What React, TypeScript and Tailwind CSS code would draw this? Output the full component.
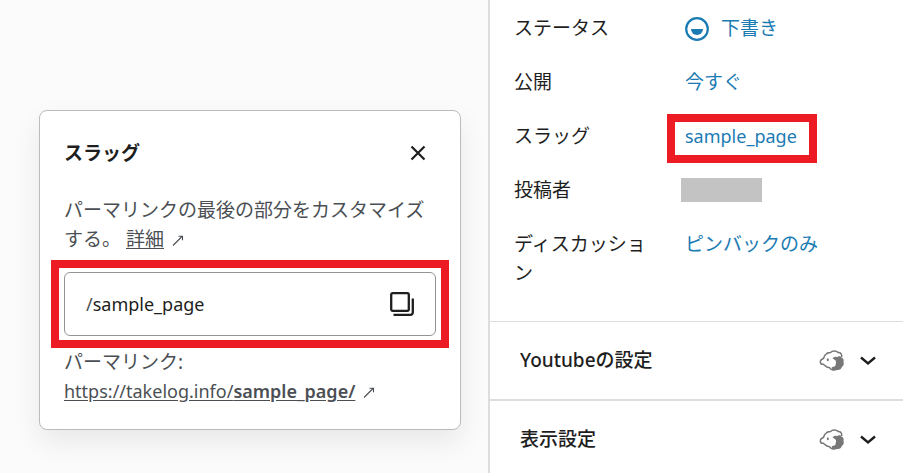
import React from 'react';

const rowClass = 'flex min-h-[54px] items-start px-6 pt-[14px]';
const labelClass = 'w-[146px] shrink-0 mr-[25px]';
const linkButtonClass = 'text-[#1b7bb3] cursor-pointer hover:underline';

const StatusIcon = () => (
  <svg className="h-6 w-6 shrink-0" viewBox="0 0 24 24" aria-hidden="true">
    <circle cx="12" cy="12" r="10.8" fill="none" stroke="currentColor" strokeWidth="2.2" />
    <path d="M6 12h12a6 6 0 0 1-12 0z" fill="currentColor" />
  </svg>
);

const CopyIcon = () => (
  <svg className="h-6 w-6" viewBox="0 0 24 24" fill="none" stroke="currentColor" strokeWidth="2.3" aria-hidden="true">
    <rect x="1.2" y="1.2" width="17.6" height="17.6" rx="1.5" />
    <path d="M22.800 6.500v14a2.300 2.300 0 0 1-2.300 2.300H3.500" />
  </svg>
);

const CloseIcon = () => (
  <svg className="h-4 w-4" viewBox="0 0 16 16" fill="none" stroke="currentColor" strokeWidth="2.2" aria-hidden="true">
    <path d="M1.5 1.5l13 13M14.5 1.5l-13 13" />
  </svg>
);

const ArrowIcon = () => (
  <svg className="ml-2 inline h-3 w-3" viewBox="0 0 12 12" fill="none" stroke="currentColor" strokeWidth="1.1" aria-hidden="true">
    <path d="M1 10.500L10 1.500M6.500 1.200h4v4" />
  </svg>
);

const SheepIcon = () => (
  <svg className="h-6 w-7 text-[#777]" viewBox="0 0 28 24" aria-hidden="true">
    <path
      d="M8 5.500C9 3.500 11.500 3.500 12.500 3.500C14.500 1.500 18.500 1.700 20 3.500C22.500 3.200 24 5 23.700 8M8 5.500C6 6 6.300 8.500 5.300 9.500C3.500 10.500 2 10.800 2.300 12.800C2.500 14.500 3.800 15.500 5.500 15.300C7 16.500 8 18.500 11.500 18.700C12.500 20.500 14 21.200 16 21"
      fill="none"
      stroke="currentColor"
      strokeWidth="1.500"
    />
    <path
      d="M14.500 9.800C15.500 7.800 17.500 7.200 18.800 8.200C20.500 6.800 22.800 7 23.500 8.500C25.500 9.500 26 11 25.500 12.700C26.300 14.800 25.500 16.800 24 17.700C23.500 20 21 21.500 18.800 20.900C17 22 14.500 21.700 13 20C14.500 19.700 14.500 18.700 13.500 18C16.500 18 18.200 16.700 17.500 15.200C19 13.500 17.800 10.500 14.500 9.800Z"
      fill="currentColor"
    />
    <ellipse cx="9.800" cy="10.700" rx="1" ry="1.500" fill="currentColor" />
  </svg>
);

const ChevronIcon = () => (
  <svg className="h-[10px] w-4" viewBox="0 0 16 10" fill="none" stroke="currentColor" strokeWidth="2.4" aria-hidden="true">
    <path d="M1 1.500l7 6 7-6" />
  </svg>
);

const SettingsPanel = ({ title }: { title: string }) => (
  <button type="button" className="flex w-full items-center py-6 pl-[30px] pr-[27px] text-left font-medium">
    <span className="flex-1">{title}</span>
    <SheepIcon />
    <span className="ml-[14px]">
      <ChevronIcon />
    </span>
  </button>
);

const SlugPopover = () => (
  <section
    role="dialog"
    aria-labelledby="slug-title"
    className="w-full max-w-[422px] rounded-lg border border-[#bbb] bg-white px-6 pt-[25px] pb-[23px] text-[#4b4f54] shadow-[0_12px_28px_rgba(0,0,0,0.08)]"
  >
    <div className="flex items-center justify-between pr-[10px] text-[#1e1e1e]">
      <h2 id="slug-title" className="leading-[34px] font-bold">スラッグ</h2>
      <button type="button" aria-label="閉じる" className="cursor-pointer">
        <CloseIcon />
      </button>
    </div>

    <p className="mt-[26px]">
      パーマリンクの最後の部分をカスタマイズする。{' '}
      <a href="#details" className="inline-block underline underline-offset-2">詳細</a>
      <ArrowIcon />
    </p>

    <div className="-mx-[13px] mt-[6px] border-8 border-[#ed1c24] px-[5px] py-1">
      <div className="flex h-16 items-center rounded-md border border-[#949494] px-[21px] text-lg text-[#1e1e1e]">
        <span aria-hidden="true" className="text-[#4b4f54]">/</span>
        <input
          type="text"
          aria-label="スラッグ"
          defaultValue="sample_page"
          className="min-w-0 flex-1 bg-transparent outline-none"
        />
        <button type="button" aria-label="コピー" className="cursor-pointer">
          <CopyIcon />
        </button>
      </div>
    </div>

    <p>パーマリンク:</p>
    <p className="text-lg leading-[29px]">
      <a href="#permalink" className="underline underline-offset-2">
        https://takelog.info/<b className="font-semibold">sample_page/</b>
      </a>
      <ArrowIcon />
    </p>
  </section>
);

const App = () => {
  return (
    <div className="flex min-h-screen bg-[#fbfbfb] font-['Noto_Sans','Noto_Sans_CJK_JP',sans-serif] text-[19px] leading-[29px] text-[#1e1e1e]">
      <main className="min-w-0 flex-1 pt-[110px] pr-[27px] pl-[39px]">
        <SlugPopover />
      </main>

      <aside className="w-[415px] shrink-0 border-l-2 border-[#ddd] bg-white">
        <div className="pb-[33px]">
          <div className={rowClass}>
            <span className={labelClass}>ステータス</span>
            <button type="button" className={`${linkButtonClass} flex items-center gap-3`}>
              <StatusIcon />
              下書き
            </button>
          </div>
          <div className={rowClass}>
            <span className={labelClass}>公開</span>
            <button type="button" className={linkButtonClass}>今すぐ</button>
          </div>
          <div className={rowClass}>
            <span className={labelClass}>スラッグ</span>
            {/* 強調枠 */}
            <div className="-my-2 -ml-[18px] border-8 border-[#ed1c24] pr-3 pb-1 pl-[10px]">
              <button type="button" className={`${linkButtonClass} text-lg leading-[29px]`}>sample_page</button>
            </div>
          </div>
          <div className={rowClass}>
            <span className={labelClass}>投稿者</span>
            <span className="-ml-1 mt-[2px] h-6 w-[81px] bg-[#c3c3c3]" />
          </div>
          <div className={rowClass}>
            <span className={labelClass}>ディスカッション</span>
            <button type="button" className={linkButtonClass}>ピンバックのみ</button>
          </div>
        </div>

        <div className="border-t border-[#ddd]">
          <SettingsPanel title="Youtubeの設定" />
        </div>
        <div className="border-t-2 border-[#ddd]">
          <SettingsPanel title="表示設定" />
        </div>
      </aside>
    </div>
  );
};

export default App;
